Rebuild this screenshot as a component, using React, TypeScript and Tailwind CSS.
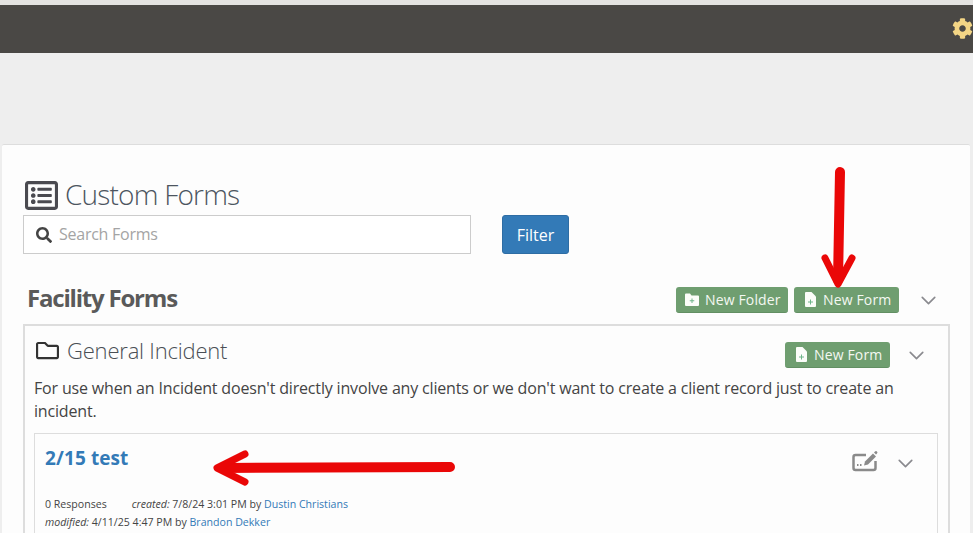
import type { ReactNode } from "react";
import { ChevronDown } from "lucide-react";
import { FaCog, FaRegListAlt, FaRegFolder, FaSearch } from "react-icons/fa";

function FolderPlusIcon() {
  return (
    <svg width="14" height="13" viewBox="0 0 14 13">
      <path d="M0 1.500A1 1 0 0 1 1 .5h4l1.500 2H13a1 1 0 0 1 1 1V12a1 1 0 0 1-1 1H1a1 1 0 0 1-1-1z" fill="#fbfdf9" />
      <path d="M7 5.500v4.500M4.750 7.750h4.500" stroke="#6fb58a" strokeWidth="1" />
    </svg>
  );
}

function FilePlusIcon() {
  return (
    <svg width="11" height="15" viewBox="0 0 11 15">
      <path d="M0 1a1 1 0 0 1 1-1h5.500L11 4.500V14a1 1 0 0 1-1 1H1a1 1 0 0 1-1-1z" fill="#fbfdf9" />
      <path d="M5.500 7.500v5M3 10h5" stroke="#6fb58a" strokeWidth="1" />
    </svg>
  );
}

function GreenButton({ icon, label, className }: { icon: ReactNode; label: string; className?: string }) {
  return (
    <button className={`h-[26px] flex items-center rounded-[3px] bg-[#6f9e70] border-b border-[#628f63] text-[#f4f8f2] text-[14px] tracking-[0.15px] leading-none ${className ?? ""}`}>
      {icon}
      {label}
    </button>
  );
}

function Chevron({ className }: { className?: string }) {
  return <ChevronDown className={`text-[#8a8a8f] ${className ?? ""}`} size={25} strokeWidth={1.6} />;
}

export default function App() {
  return (
    <div className="relative h-[533px] w-[973px] overflow-hidden bg-[#eeeeee] font-['Open_Sans',sans-serif] text-[#4a4a4a]">
      <div className="h-[5px] bg-[#e4e3e1]" />
      <header className="h-[48px] bg-[#4a4845] flex items-center justify-end">
        <FaCog className="text-[#f3d585] mt-[-2px]" size={21} />
      </header>

      <main className="mt-[91px] ml-[2px] w-[968px] h-[400px] bg-[#fdfdfd] border-t border-[#dddddd] rounded-t-[2px] px-[21px] pt-[32px]">
        <div className="flex items-center h-[36px] gap-[7px] pl-[2px]">
          <FaRegListAlt className="text-[#4a4a50]" size={33} />
          <h1 className="mb-[2px] text-[28px] font-light tracking-[-0.8px] text-[#4c5560] leading-none">Custom Forms</h1>
        </div>

        <div className="flex mt-[2px]">
          <div className="w-[448px] h-[39px] border border-[#cccccc] bg-white flex items-center pl-[12px] gap-[7px]">
            <FaSearch className="text-[#444444]" size={16} />
            <span className="mb-[2px] text-[16px] tracking-[-0.25px] text-[#a4a4a4]">Search Forms</span>
          </div>
          <button className="ml-[31px] w-[67px] h-[39px] rounded-[3px] bg-[#337ab7] border border-[#2e6da4] text-white text-[16px]">Filter</button>
        </div>

        <div className="flex items-center mt-[33px] h-[26px]">
          <h2 className="mb-[4px] ml-[4px] text-[24px] font-bold tracking-[-1.2px] text-[#5a5a5a] leading-none">Facility Forms</h2>
          <div className="ml-auto flex items-center">
            <GreenButton className="w-[112px] pl-[9px] gap-[6px]" icon={<FolderPlusIcon />} label="New Folder" />
            <GreenButton className="ml-[6px] w-[105px] pl-[11px] gap-[7px]" icon={<FilePlusIcon />} label="New Form" />
            <Chevron className="ml-[17px] mr-[8px]" />
          </div>
        </div>

        <section className="mt-[11px] w-[927px] h-[300px] border-2 border-[#dddddd] px-[9px] pt-[16px]">
          <div className="flex items-center h-[26px]">
            <FaRegFolder className="mb-[10px] text-[#333333] ml-[2px]" size={23} />
            <h3 className="mb-[10px] ml-[8px] text-[22px] font-light tracking-[-0.2px] text-[#4a4f55] leading-none">General Incident</h3>
            <div className="ml-auto flex items-center">
              <GreenButton className="w-[105px] pl-[11px] gap-[7px]" icon={<FilePlusIcon />} label="New Form" />
              <Chevron className="ml-[14px] mr-[10px]" />
            </div>
          </div>
          <p className="mt-[9px] text-[16px] tracking-[-0.17px] leading-[23px] text-[#444444]">
            For use when an Incident doesn't directly involve any clients or we don't want to create a client record just to create an incident.
          </p>
          <div className="mt-[10px] w-[904px] h-[200px] border border-[#dddddd] pl-[10px] pr-[19px] pt-[11px]">
            <div className="flex items-start">
              <a className="text-[19px] font-bold tracking-[0.1px] text-[#337ab7] leading-[26px]">2/15 test</a>
              <div className="ml-auto flex items-center gap-[15px]">
                <svg width="26" height="22" viewBox="0 0 26 22" fill="none" className="text-[#8a8a8a]">
                  <path d="M14 5H3.500A2 2 0 0 0 1.500 7v11a2 2 0 0 0 2 2h18a2 2 0 0 0 2-2v-7" stroke="currentColor" strokeWidth="2.500" />
                  <path d="M12 15.500l1-4L21 3.500l3 3-8 8z" fill="currentColor" />
                  <path d="M22 2.500l1-1a1.400 1.400 0 0 1 2 2l-1 1z" fill="currentColor" />
                  <path d="M5 15h1.500M8 15h1.500" stroke="currentColor" strokeWidth="2" />
                </svg>
                <Chevron className="mt-[6px]" />
              </div>
            </div>
            <div className="mt-[19px] text-[10.6px] leading-[18px] text-[#444444]">
              <div>
                <span className="mr-[25px]">0 Responses</span>
                <i>created:</i> 7/8/24 3:01 PM by <a className="text-[#337ab7]">Dustin Christians</a>
              </div>
              <div>
                <i>modified:</i> 4/11/25 4:47 PM by <a className="text-[#337ab7]">Brandon Dekker</a>
              </div>
            </div>
          </div>
        </section>
      </main>

      {/* red annotation arrows drawn over the page */}
      <svg className="absolute inset-0 pointer-events-none" width="973" height="533" fill="none" stroke="#ea0707" strokeLinecap="round" strokeLinejoin="round">
        <path d="M840 172L838 280" strokeWidth="10" />
        <path d="M825 258L838 284L852 258" strokeWidth="7" />
        <path d="M450 467L222 468" strokeWidth="10" />
        <path d="M245 454L217 468L245 482" strokeWidth="7" />
      </svg>
    </div>
  );
}
